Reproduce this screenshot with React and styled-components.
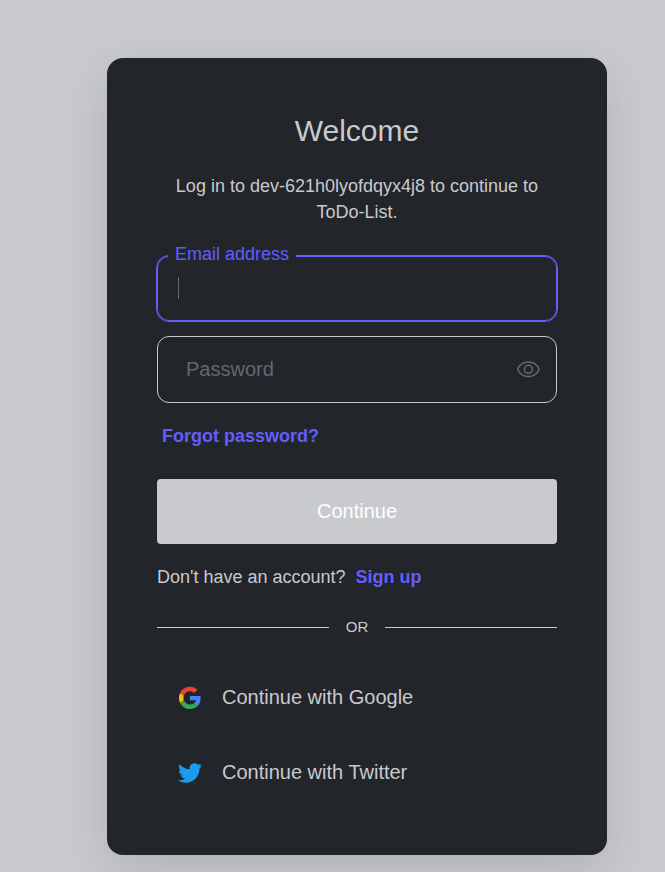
import React from "react";
import styled, { createGlobalStyle, css } from "styled-components";

const colors = {
  page: "#c9cace",
  card: "#222529",
  text: "#c9cace",
  muted: "#65676e",
  accent: "#635dff",
};

const GlobalStyle = createGlobalStyle`
  * { box-sizing: border-box; }
  body {
    margin: 0;
    background: ${colors.page};
    color: ${colors.text};
    font-family: "Liberation Sans", Arial, sans-serif;
    font-size: 18px;
    line-height: 26px;
  }
`;

const Page = styled.main`
  display: flex;
  justify-content: center;
  padding: 58px 0 17px 49px;
`;

const Card = styled.section`
  width: 100%;
  max-width: 500px;
  padding: 50px 50px 51px;
  border-radius: 16px;
  background: ${colors.card};
  box-shadow: 0 15px 50px rgba(0, 0, 0, 0.12);
`;

const Header = styled.header`
  padding: 5px 16px 0;
  text-align: center;
`;

const Title = styled.h1`
  margin: 0 0 24px;
  font-size: 30px;
  font-weight: 400;
  line-height: 36px;
`;

const Description = styled.p`
  margin: 0;
`;

const Form = styled.form`
  display: flex;
  flex-direction: column;
  margin-top: 31px;
`;

const Field = styled.div`
  position: relative;
  display: flex;
  align-items: center;
  height: ${(p) => (p.$active ? 65 : 67)}px;
  margin-bottom: ${(p) => (p.$active ? 15 : 20)}px;
  border: 1px solid ${(p) => (p.$active ? colors.accent : colors.text)};
  border-radius: 12px;
  ${(p) =>
    p.$active &&
    css`
      outline: 1px solid ${colors.accent};
    `}
`;

const Input = styled.input`
  flex: 1;
  min-width: 0;
  height: 100%;
  padding: 0 20px 0 28px;
  border: 0;
  outline: 0;
  background: transparent;
  color: ${colors.text};
  caret-color: transparent;
  font: inherit;
  font-size: 20px;
  &::placeholder {
    color: ${colors.muted};
    opacity: 1;
  }
`;

const FloatingLabel = styled.label`
  position: absolute;
  top: -16px;
  left: 10px;
  padding: 0 7px;
  background: ${colors.card};
  color: ${colors.accent};
`;

const Caret = styled.span`
  position: absolute;
  top: 20px;
  left: 20px;
  width: 1px;
  height: 22px;
  background: ${colors.muted};
`;

const RevealButton = styled.button`
  display: flex;
  margin-right: 16px;
  padding: 0;
  border: 0;
  background: none;
  color: ${colors.muted};
  cursor: pointer;
`;

const Link = styled.a`
  color: ${colors.accent};
  font-weight: 700;
  text-decoration: none;
`;

const ForgotLink = styled(Link)`
  align-self: flex-start;
  margin: 0 5px 30px;
`;

const SubmitButton = styled.button`
  height: 65px;
  padding: 0 16px 2px;
  border: 0;
  border-radius: 4px;
  background: ${colors.page};
  color: #fff;
  font: inherit;
  font-size: 20px;
  cursor: pointer;
`;

const SignUp = styled.p`
  display: flex;
  flex-wrap: wrap;
  gap: 10px;
  margin: 20px 0 24px;
`;

const Divider = styled.div`
  display: flex;
  align-items: center;
  gap: 17px;
  margin-bottom: 24px;
  font-size: 15px;
  &::before,
  &::after {
    content: "";
    flex: 1;
    height: 1px;
    background: ${colors.text};
  }
`;

const Providers = styled.div`
  display: flex;
  flex-direction: column;
  gap: 10px;
`;

const ProviderButton = styled.button`
  display: flex;
  align-items: center;
  gap: 20px;
  height: 65px;
  padding: 0 21px;
  border: 0;
  background: none;
  color: ${colors.text};
  font: inherit;
  font-size: 20px;
  text-align: left;
  cursor: pointer;
`;

const EyeIcon = () => (
  <svg width="24" height="18" viewBox="0 0 24 18" fill="none" stroke="currentColor" strokeWidth="1.6" aria-hidden="true">
    <path d="M1.6 8.3C3.6 3.6 7.7 1 12.4 1S21.2 3.6 23.2 8.3c-2 4.7-6.1 7.3-10.8 7.3S3.6 13 1.6 8.3Z" strokeLinejoin="round" />
    <circle cx="12.4" cy="8.3" r="4" />
  </svg>
);

const GoogleIcon = () => (
  <svg width="24" height="24" viewBox="-2 -4 52 52" aria-hidden="true">
    <path fill="#EA4335" d="M24 9.5c3.54 0 6.71 1.22 9.21 3.6l6.85-6.85C35.9 2.38 30.47 0 24 0 14.62 0 6.51 5.38 2.56 13.22l7.98 6.19C12.43 13.72 17.74 9.5 24 9.5z" />
    <path fill="#4285F4" d="M46.98 24.55c0-1.57-.15-3.09-.38-4.55H24v9.02h12.94c-.58 2.96-2.26 5.48-4.78 7.18l7.73 6c4.51-4.18 7.09-10.36 7.09-17.65z" />
    <path fill="#FBBC05" d="M10.53 28.59c-.48-1.45-.76-2.99-.76-4.59s.27-3.14.76-4.59l-7.98-6.19C.92 16.46 0 20.12 0 24s.92 7.54 2.56 10.78l7.97-6.19z" />
    <path fill="#34A853" d="M24 48c6.48 0 11.93-2.13 15.89-5.81l-7.73-6c-2.15 1.45-4.92 2.3-8.16 2.3-6.26 0-11.57-4.22-13.47-9.91l-7.98 6.19C6.51 42.62 14.62 48 24 48z" />
  </svg>
);

const TwitterIcon = () => (
  <svg width="24" height="24" viewBox="0 -1 24 24" fill="#1d9bf0" aria-hidden="true">
    <path d="M23.953 4.57a10 10 0 01-2.825.775 4.958 4.958 0 002.163-2.723c-.951.555-2.005.959-3.127 1.184a4.92 4.92 0 00-8.384 4.482C7.69 8.095 4.067 6.13 1.64 3.162a4.822 4.822 0 00-.666 2.475c0 1.71.87 3.213 2.188 4.096a4.904 4.904 0 01-2.228-.616v.06a4.923 4.923 0 003.946 4.827 4.996 4.996 0 01-2.212.085 4.936 4.936 0 004.604 3.417 9.867 9.867 0 01-6.102 2.105c-.39 0-.779-.023-1.17-.067a13.995 13.995 0 007.557 2.209c9.053 0 13.998-7.496 13.998-13.985 0-.21 0-.42-.015-.63A9.935 9.935 0 0024 4.59z" />
  </svg>
);

export default function App() {
  return (
    <>
      <GlobalStyle />
      <Page>
        <Card>
          <Header>
            <Title>Welcome</Title>
            <Description>Log in to dev-621h0lyofdqyx4j8 to continue to ToDo-List.</Description>
          </Header>
          <Form onSubmit={(e) => e.preventDefault()}>
            <Field $active>
              <FloatingLabel htmlFor="email">Email address</FloatingLabel>
              <Caret />
              <Input id="email" type="email" autoComplete="email" />
            </Field>
            <Field>
              <Input type="password" aria-label="Password" placeholder="Password" />
              <RevealButton type="button" aria-label="Show password">
                <EyeIcon />
              </RevealButton>
            </Field>
            <ForgotLink href="#forgot">Forgot password?</ForgotLink>
            <SubmitButton type="submit">Continue</SubmitButton>
          </Form>
          <SignUp>
            Don't have an account?
            <Link href="#signup">Sign up</Link>
          </SignUp>
          <Divider>OR</Divider>
          <Providers>
            <ProviderButton type="button">
              <GoogleIcon />
              Continue with Google
            </ProviderButton>
            <ProviderButton type="button">
              <TwitterIcon />
              Continue with Twitter
            </ProviderButton>
          </Providers>
        </Card>
      </Page>
    </>
  );
}
